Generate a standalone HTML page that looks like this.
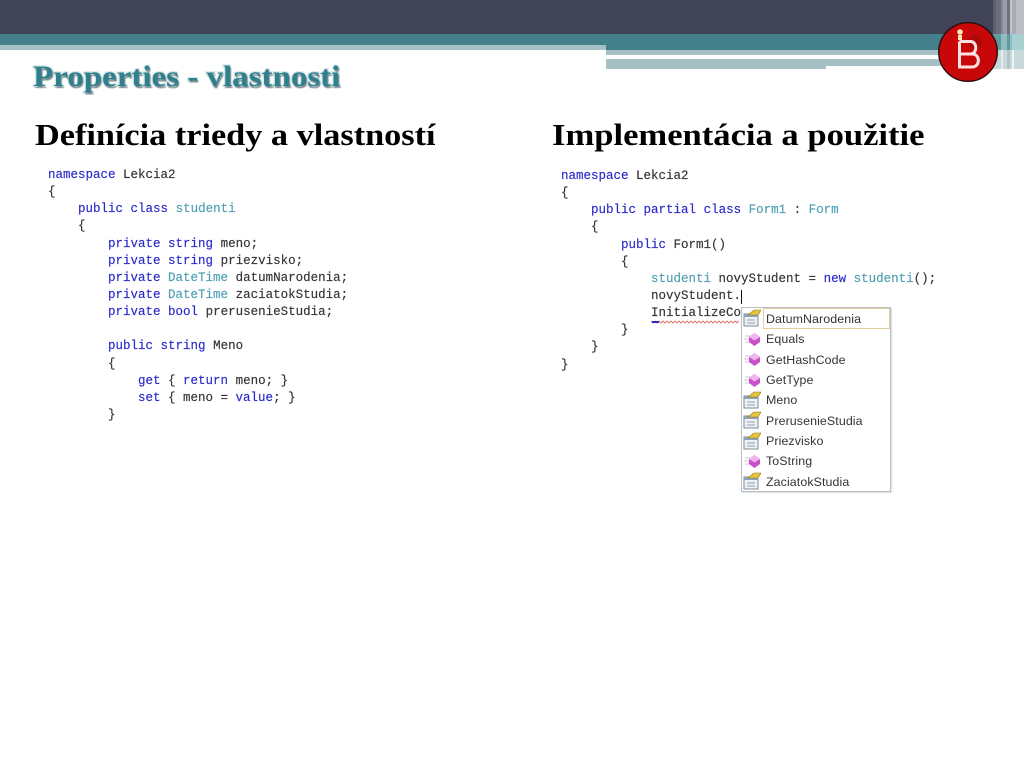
<!DOCTYPE html>
<html><head><meta charset="utf-8"><title>Properties - vlastnosti</title>
<style>
html,body{margin:0;padding:0;background:#fff;width:1024px;height:768px;overflow:hidden}
.a{position:absolute}
.h{position:absolute;font:bold 31px/34px "Liberation Serif",serif;color:#000;white-space:nowrap;transform-origin:0 50%}
pre{position:absolute;margin:0;font:12.5px/17.14px "Liberation Mono",monospace;color:#333;-webkit-text-stroke:.15px #333}
pre b{font-weight:normal;color:#2a2acb;-webkit-text-stroke:.15px #2a2acb}
pre i{font-style:normal;color:#4f9fb3;-webkit-text-stroke:.15px #4f9fb3}
.it{position:absolute;left:766px;font:12.4px/16px "Liberation Sans",sans-serif;color:#333;letter-spacing:.1px;white-space:nowrap}
svg.ic{position:absolute;left:743px;width:18px;height:18px}
</style></head><body>
<div class="a" style="left:0;top:0;width:1024px;height:34px;background:#414356"></div>
<div class="a" style="left:0;top:34px;width:606px;height:11px;background:#43808a"></div>
<div class="a" style="left:0;top:45px;width:606px;height:5px;background:#a5c1c5"></div>
<div class="a" style="left:606px;top:34px;width:418px;height:16px;background:#43808a"></div>
<div class="a" style="left:606px;top:50px;width:418px;height:5px;background:#a5c1c5"></div>
<div class="a" style="left:606px;top:59px;width:220px;height:10px;background:#a5c1c5"></div>
<div class="a" style="left:826px;top:59px;width:180px;height:7px;background:#a5c1c5"></div>

<svg class="a" style="left:993px;top:0" width="31" height="69" viewBox="0 0 31 69">
<rect x="0" y="0" width="31" height="34" fill="#8b8d9b"/>
<rect x="0" y="0" width="3" height="34" fill="#5d5f70"/>
<rect x="3" y="0" width="5" height="34" fill="#6c6e7e"/>
<rect x="8" y="0" width="2" height="34" fill="#85879a"/>
<rect x="10" y="0" width="4" height="34" fill="#9a9ca8"/>
<rect x="14" y="0" width="3" height="34" fill="#6e7080"/>
<rect x="17" y="0" width="2" height="34" fill="#c4c5cc"/>
<rect x="19" y="0" width="4" height="34" fill="#a9aab4"/>
<rect x="23" y="0" width="8" height="34" fill="#bcbdc5"/>
<rect x="0" y="34" width="31" height="16" fill="#8fbcbf"/>
<rect x="0" y="34" width="8" height="16" fill="#5f9a9f"/>
<rect x="14" y="34" width="3" height="16" fill="#5f9a9f"/>
<rect x="19" y="34" width="12" height="16" fill="#a9d0d0"/>
<rect x="0" y="50" width="31" height="19" fill="#c9d8da"/>
<rect x="8" y="50" width="2" height="19" fill="#e4ecec"/>
<rect x="14" y="50" width="3" height="19" fill="#b0c6c8"/>
<rect x="19" y="50" width="2" height="19" fill="#eef3f3"/>
</svg>

<svg class="a" style="left:936px;top:21px" width="64" height="62" viewBox="0 0 64 62">
<circle cx="32" cy="31" r="29.3" fill="#c80808" stroke="#2c0d0d" stroke-width="1.4"/>
<circle cx="39" cy="21" r="7" fill="#8f0b0b" opacity=".5"/>
<circle cx="24" cy="11" r="2.8" fill="#ffe9b0"/>
<rect x="22" y="14" width="4" height="5" fill="#ffe9b0"/>
<path d="M23.500 20.500 V46 H36 C44.500 46 44.500 33 36 33 H23.500 M23.500 20.500 H34.500 C41.500 20.500 41.500 33 34.500 33" fill="none" stroke="#fde0e0" stroke-width="3"/>
</svg>

<div class="a" style="left:33px;top:60px;font:bold 30px/34px 'Liberation Serif',serif;color:#2f808c;white-space:nowrap;-webkit-text-stroke:2.4px #d9eaec;paint-order:stroke fill;text-shadow:1px 2px 1px #7d8b90;transform:scaleX(1.1);transform-origin:0 50%">Properties - vlastnosti</div>

<div class="h" style="left:35px;top:118px;transform:scaleX(1.105)">Definícia triedy a vlastností</div>
<div class="h" style="left:552px;top:118px;transform:scaleX(1.115)">Implementácia a použitie</div>

<pre style="left:48px;top:167px"><b>namespace</b> Lekcia2
{
    <b>public</b> <b>class</b> <i>studenti</i>
    {
        <b>private</b> <b>string</b> meno;
        <b>private</b> <b>string</b> priezvisko;
        <b>private</b> <i>DateTime</i> datumNarodenia;
        <b>private</b> <i>DateTime</i> zaciatokStudia;
        <b>private</b> <b>bool</b> prerusenieStudia;

        <b>public</b> <b>string</b> Meno
        {
            <b>get</b> { <b>return</b> meno; }
            <b>set</b> { meno = <b>value</b>; }
        }</pre>

<pre style="left:561px;top:168px"><b>namespace</b> Lekcia2
{
    <b>public</b> <b>partial</b> <b>class</b> <i>Form1</i> : <i>Form</i>
    {
        <b>public</b> Form1()
        {
            <i>studenti</i> novyStudent = <b>new</b> <i>studenti</i>();
            novyStudent.
            InitializeCo
        }
    }
}</pre>
<div class="a" style="left:741px;top:290px;width:1px;height:14px;background:#111"></div>
<svg class="a" style="left:651px;top:318px" width="92" height="6" viewBox="0 0 92 6"><path d="M0 3 l2 2 2-2 2 2 2-2 2 2 2-2 2 2 2-2 2 2 2-2 2 2 2-2 2 2 2-2 2 2 2-2 2 2 2-2 2 2 2-2 2 2 2-2 2 2 2-2 2 2 2-2 2 2 2-2 2 2 2-2 2 2 2-2 2 2 2-2 2 2 2-2 2 2 2-2 2 2 2-2 2 2 2-2 2 2 2-2" fill="none" stroke="#e26a6a" stroke-width=".9"/><rect x="1" y="3" width="7" height="2" fill="#2a2acb"/></svg>

<div class="a" style="left:741px;top:307px;width:148px;height:183px;background:#fff;border:1px solid #b9c0c4;box-shadow:1px 1px 1px #ddd"></div>
<div class="a" style="left:763px;top:308px;width:125px;height:19px;border:1px solid #e2cf9f;background:#fff"></div>

<svg width="0" height="0" style="position:absolute"><defs>
<g id="p"><rect x="1" y="5" width="14" height="12" fill="#eef2f6" stroke="#7d8a99"/><rect x="1" y="5" width="14" height="3" fill="#8fa3b8"/><path d="M4 11h8M4 14h8" stroke="#8fa0b0"/><path d="M5 6 L11 1 H18 L15 6 H9 Z" fill="#e8c33c" stroke="#8a7420" stroke-width=".6"/></g>
<g id="m"><path d="M2 6h5M1 9h6M2 12h5" stroke="#d8d0dc" stroke-width="1.2"/><path d="M11.500 3 L17 7 V12 L11.500 16 L6 12 V7 Z" fill="#c850c8"/><path d="M11.500 3 L17 7 L11.500 10.500 L6 7 Z" fill="#f0b4ee"/></g>
</defs></svg>

<svg class="ic" style="top:309px" viewBox="0 0 18 18"><use href="#p"/></svg><div class="it" style="top:311px">DatumNarodenia</div>
<svg class="ic" style="top:330px" viewBox="0 0 18 18"><use href="#m"/></svg><div class="it" style="top:331px">Equals</div>
<svg class="ic" style="top:350px" viewBox="0 0 18 18"><use href="#m"/></svg><div class="it" style="top:352px">GetHashCode</div>
<svg class="ic" style="top:371px" viewBox="0 0 18 18"><use href="#m"/></svg><div class="it" style="top:372px">GetType</div>
<svg class="ic" style="top:391px" viewBox="0 0 18 18"><use href="#p"/></svg><div class="it" style="top:392px">Meno</div>
<svg class="ic" style="top:411px" viewBox="0 0 18 18"><use href="#p"/></svg><div class="it" style="top:413px">PrerusenieStudia</div>
<svg class="ic" style="top:432px" viewBox="0 0 18 18"><use href="#p"/></svg><div class="it" style="top:433px">Priezvisko</div>
<svg class="ic" style="top:452px" viewBox="0 0 18 18"><use href="#m"/></svg><div class="it" style="top:453px">ToString</div>
<svg class="ic" style="top:472px" viewBox="0 0 18 18"><use href="#p"/></svg><div class="it" style="top:474px">ZaciatokStudia</div>
</body></html>
